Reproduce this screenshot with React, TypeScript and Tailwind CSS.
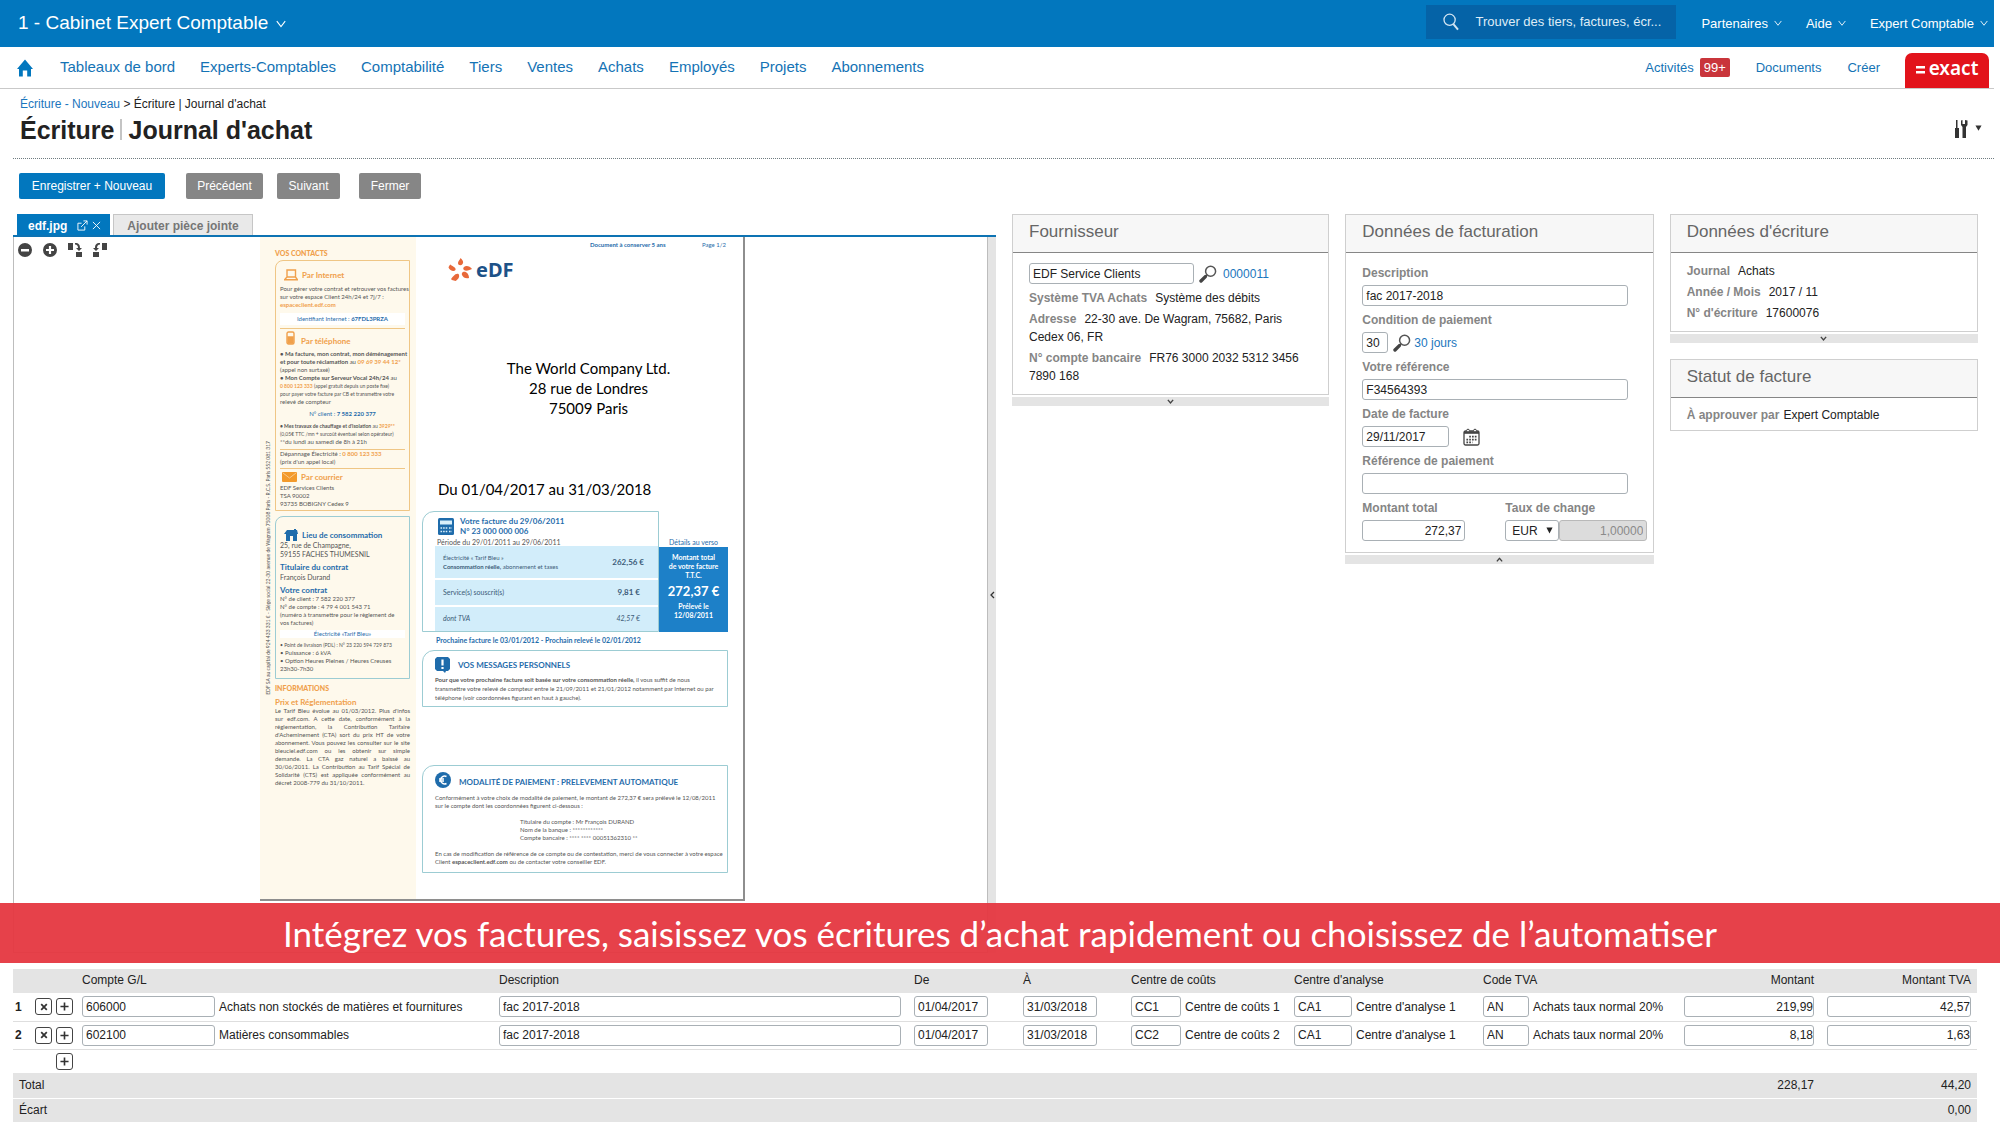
import type { ReactNode } from "react";

const field =
  "h-[21px] min-w-0 rounded-[3px] border border-[#a9b0b5] bg-white px-[3px] text-xs text-[#222] outline-none";

function Chevron({ className = "w-2" }: { className?: string }) {
  return (
    <svg viewBox="0 0 10 8" className={className} fill="none" stroke="currentColor" strokeWidth="1.1" aria-hidden="true">
      <path d="M0.8 1.2 5 6.6 9.2 1.2" />
    </svg>
  );
}

function Magnifier() {
  return (
    <svg viewBox="0 0 18 18" className="w-[18px]" fill="none" aria-hidden="true">
      <circle cx="11.6" cy="6.2" r="5" stroke="#555" strokeWidth="1.5" />
      <path d="M8 9.8 6.4 11.6" stroke="#555" strokeWidth="1.5" />
      <path d="M6.4 11.6 2 16" stroke="#444" strokeWidth="3.4" strokeLinecap="round" />
    </svg>
  );
}

function CalendarIcon() {
  return (
    <svg viewBox="0 0 17 18" className="w-[17px]" fill="none" stroke="#444" aria-hidden="true">
      <rect x="1" y="3" width="15" height="14" rx="1.5" strokeWidth="1.3" />
      <path d="M1 4.5h15" strokeWidth="2.6" />
      <circle cx="5" cy="2.6" r="1.4" fill="#fff" />
      <circle cx="12" cy="2.6" r="1.4" fill="#fff" />
      <path d="M6.2 8.6h8M3.4 11.6h10.8M3.4 14.4h6" strokeWidth="1.7" strokeDasharray="1.7 1.1" />
    </svg>
  );
}

function Card({ title, arrow, children }: { title: string; arrow?: "up" | "down"; children: ReactNode }) {
  return (
    <section className="mb-4">
      <div className="border border-[#cfcfcf] bg-white">
        <h2 className="h-[38px] border-b border-[#868686] bg-[#f7f7f7] px-4 text-[17px] leading-[34px] text-[#666]">{title}</h2>
        {children}
      </div>
      {arrow && (
        <button type="button" aria-label={`Basculer ${title}`} className="mt-0.5 flex h-[9px] w-full items-center justify-center bg-[#e4e4e4] text-[#444]">
          <svg viewBox="0 0 8 6" className={arrow === "up" ? "w-[7px] rotate-180" : "w-[7px]"} fill="none" stroke="currentColor" strokeWidth="1.6" aria-hidden="true">
            <path d="M1 1 4 4.4 7 1" />
          </svg>
        </button>
      )}
    </section>
  );
}

function Pair({ label, children }: { label: string; children: ReactNode }) {
  return (
    <p>
      <b className="mr-2 text-[#858585]">{label}</b>
      {children}
    </p>
  );
}

function Label({ id, children }: { id: string; children: ReactNode }) {
  return (
    <label htmlFor={id} className="block h-[26px] text-xs leading-7 font-bold text-[#858585]">
      {children}
    </label>
  );
}

function TopBar() {
  return (
    <header className="mr-1.5 flex h-[47px] items-center bg-[#0277be] pl-[18px] text-white">
      <button type="button" className="flex items-center gap-2 text-[19px]">
        1 - Cabinet Expert Comptable <Chevron className="w-2.5" />
      </button>
      <label className="mb-1 ml-auto flex h-[34px] w-[250px] items-center bg-[#0563a7] pl-[17px]">
        <svg viewBox="0 0 16 18" className="w-4" fill="none" stroke="#d5e6f3" strokeWidth="1.3" aria-hidden="true">
          <circle cx="6.6" cy="6.8" r="5.6" />
          <path d="m10.4 11.2 4.6 5.4" strokeWidth="2" />
        </svg>
        <input
          aria-label="Recherche"
          placeholder="Trouver des tiers, factures, écr..."
          className="ml-4 w-[196px] bg-transparent text-[13px] outline-none placeholder:text-[#dfecf6]"
        />
      </label>
      <div className="ml-[25px] flex items-center gap-6 pr-1.5 text-[13px]">
        {["Partenaires", "Aide", "Expert Comptable"].map((t) => (
          <button key={t} type="button" className="flex items-center gap-1.5">
            {t} <Chevron />
          </button>
        ))}
      </div>
    </header>
  );
}

function NavBar() {
  const items = ["Tableaux de bord", "Experts-Comptables", "Comptabilité", "Tiers", "Ventes", "Achats", "Employés", "Projets", "Abonnements"];
  return (
    <nav className="mr-1.5 flex h-[42px] items-center border-b border-[#c9c9c9] pl-4 text-[#1473b5]">
      <a href="#accueil" aria-label="Accueil" className="mr-[26px]">
        <svg viewBox="0 0 18 18" className="w-[18px]" fill="#0277be" aria-hidden="true">
          <path d="M9 0.5 17 10h-2v7.5h-3.8v-6H6.8v6H3V10H1z" />
        </svg>
      </a>
      <div className="flex gap-[25px] text-[15px]">
        {items.map((t) => (
          <a key={t} href="#menu">{t}</a>
        ))}
      </div>
      <div className="ml-auto flex h-full items-center text-[13px]">
        <a href="#activites">Activités</a>
        <span className="ml-1.5 flex h-[19px] w-[30px] items-center justify-center rounded-[2px] bg-[#c9353b] text-white">99+</span>
        <a href="#documents" className="ml-[26px]">Documents</a>
        <a href="#creer" className="ml-[26px]">Créer</a>
        <a href="#exact" className="mr-[5px] ml-[25px] flex h-[35px] w-[84px] items-center justify-center gap-1 self-end rounded-t-[7px] bg-[#e2131b] pb-1 font-['Noto_Sans',sans-serif] text-[19px] font-semibold text-white">
          <svg viewBox="0 0 9 8" className="mt-0.5 w-[9px]" fill="#fff" aria-hidden="true">
            <path d="M0 0h9v2.4H0zM0 5h9v2.4H0z" />
          </svg>
          exact
        </a>
      </div>
    </nav>
  );
}

function Tiny({ children, className = "" }: { children: ReactNode; className?: string }) {
  return <p className={`text-[6px] leading-[8px] whitespace-nowrap ${className}`}>{children}</p>;
}

function Dense({ children }: { children: ReactNode }) {
  return <p className="text-[5px] leading-[8px] whitespace-nowrap">{children}</p>;
}

function Heading({ children, className = "" }: { children: ReactNode; className?: string }) {
  return <p className={`text-[8px] leading-[10px] font-bold whitespace-nowrap ${className}`}>{children}</p>;
}

function CapsHeading({ children, className = "" }: { children: ReactNode; className?: string }) {
  return <p className={`text-[7px] leading-[10px] font-black whitespace-nowrap ${className}`}>{children}</p>;
}

const orange = "text-[#f0a04b]";
const blue = "text-[#1f6cab]";

function InvoiceSide() {
  return (
    <div className="flex w-[156px] shrink-0 bg-[#fef9ec] text-[#555]">
      <div className="flex w-[15px] shrink-0 items-center justify-center">
        <p className="rotate-180 text-[5px] leading-[6px] whitespace-nowrap [writing-mode:vertical-rl]">
          EDF SA au capital de 924 433 331 € - Siège social 22-30 avenue de Wagram 75008 Paris - R.C.S. Paris 552 081 317
        </p>
      </div>
      <div className="w-[135px]">
        <CapsHeading className={`pt-[11px] pb-0.5 ${orange}`}>VOS CONTACTS</CapsHeading>
        <div className="h-[251px] rounded-tl-lg border border-[#efc685] px-1">
          <div className="mt-2 flex h-3 items-center gap-1 pl-1">
            <svg viewBox="0 0 14 12" className="w-3.5" fill="none" stroke="#f0a04b" strokeWidth="1.4" aria-hidden="true">
              <path d="M3 1h8.5v7H3zM0.5 10.8h13L11.5 8H3z" />
            </svg>
            <Heading className={orange}>Par Internet</Heading>
          </div>
          <Tiny className="mt-1">Pour gérer votre contrat et retrouver vos factures</Tiny>
          <Tiny>sur votre espace Client 24h/24 et 7j/7 :</Tiny>
          <Tiny className={`font-bold ${orange}`}>espaceclient.edf.com</Tiny>
          <Tiny className={`mt-1 bg-white py-0.5 text-center ${blue}`}>Identifiant Internet : <b>67FDL3PRZA</b></Tiny>
          <div className="mt-[3px] flex h-[18px] items-center gap-1.5 border-t border-[#efc685] pl-1.5">
            <svg viewBox="0 0 9 14" className="w-[9px]" fill="none" stroke="#f0a04b" strokeWidth="1.4" aria-hidden="true">
              <rect x="1" y="1" width="7" height="12" rx="1.5" />
              <path d="M2 6h5v6H2z" fill="#f0a04b" />
            </svg>
            <Heading className={`pt-1.5 ${orange}`}>Par téléphone</Heading>
          </div>
          <Tiny className="mt-1 font-bold">• Ma facture, mon contrat, mon déménagement</Tiny>
          <Tiny><b>et pour toute réclamation</b> au <b className={orange}>09 69 39 44 12*</b></Tiny>
          <Tiny>(appel non surtaxé)</Tiny>
          <Tiny><b>• Mon Compte sur Serveur Vocal 24h/24</b> au</Tiny>
          <Dense><b className={orange}>0 800 123 333</b> (appel gratuit depuis un poste fixe)</Dense>
          <Dense>pour payer votre facture par CB et transmettre votre</Dense>
          <Tiny>relevé de compteur</Tiny>
          <Tiny className={`my-1 text-center ${blue}`}>N° client : <b>7 582 220 377</b></Tiny>
          <Dense><b>• Mes travaux de chauffage et d'isolation</b> au <b className={orange}>3929**</b></Dense>
          <Dense>(0,05€ TTC /mn + surcoût éventuel selon opérateur)</Dense>
          <Tiny className="mb-[3px]">**du lundi au samedi de 8h à 21h</Tiny>
          <Tiny className="border-t border-[#efc685]">Dépannage Électricité : <b className={orange}>0 800 123 333</b></Tiny>
          <Tiny>(prix d'un appel local)</Tiny>
          <div className="mt-0.5 flex h-4 items-center gap-1 border-t border-[#efc685] pl-0.5">
            <svg viewBox="0 0 15 10" className="w-[15px]" aria-hidden="true">
              <rect width="15" height="10" rx="1" fill="#f39a2b" />
              <path d="m1 1 6.5 5L14 1" fill="none" stroke="#f8c98c" />
            </svg>
            <Heading className={orange}>Par courrier</Heading>
          </div>
          <Tiny>EDF Services Clients</Tiny>
          <Tiny>TSA 90002</Tiny>
          <Tiny>93735 BOBIGNY Cedex 9</Tiny>
        </div>
        <div className="mt-[5px] h-[163px] rounded-tl-lg border border-[#9cccd3] px-1">
          <div className="mt-3 flex h-3 items-center gap-1 pl-1">
            <svg viewBox="0 0 14 12" className="w-3.5" fill="#1f6cab" aria-hidden="true">
              <path d="M0 5 3 1h10l1 4h-1v7H9V7H6v5H2V5zM10 0h2v2h-2z" />
            </svg>
            <Heading className={blue}>Lieu de consommation</Heading>
          </div>
          <p className="text-[7px] leading-[9px]">25, rue de Champagne,</p>
          <p className="text-[7px] leading-[9px]">59155 FACHES THUMESNIL</p>
          <Heading className={`mt-[3px] ${blue}`}>Titulaire du contrat</Heading>
          <p className="text-[7px] leading-[10px]">François Durand</p>
          <Heading className={`mt-[3px] ${blue}`}>Votre contrat</Heading>
          <Tiny>N° de client : 7 582 220 377</Tiny>
          <Tiny>N° de compte : 4 79 4 001 543 71</Tiny>
          <Tiny>(numéro à transmettre pour le règlement de</Tiny>
          <Tiny>vos factures)</Tiny>
          <Tiny className={`my-[3px] bg-white text-center ${blue}`}>Électricité «Tarif Bleu»</Tiny>
          <Dense>• Point de livraison (PDL) : N° 23 220 594 729 873</Dense>
          <Tiny>• Puissance : 6 kVA</Tiny>
          <Tiny>• Option Heures Pleines / Heures Creuses</Tiny>
          <Tiny>23h30-7h30</Tiny>
        </div>
        <CapsHeading className={`mt-1 ${orange}`}>INFORMATIONS</CapsHeading>
        <Heading className={`mt-1 ${orange}`}>Prix et Réglementation</Heading>
        <p className="text-justify text-[6px] leading-[8px]">
          Le Tarif Bleu évolue au 01/03/2012. Plus d'infos sur edf.com. A cette date, conformément à la réglementa&shy;tion, la Contribu&shy;tion
          Tarifaire d'Achemine&shy;ment (CTA) sort du prix HT de votre abonne&shy;ment. Vous pouvez les consulter sur le site bleuciel.edf.com ou
          les obtenir sur simple demande. La CTA gaz naturel a baissé au 30/06/2011. La Contribu&shy;tion au Tarif Spécial de Solidarité (CTS)
          est appliquée conformé&shy;ment au décret 2008-779 du 31/10/2011.
        </p>
      </div>
    </div>
  );
}

function InvoiceMain() {
  return (
    <div className="w-[315px] pl-1.5 text-[#555]">
      <div className={`flex pt-1 ${blue}`}>
        <Tiny className="ml-[168px] font-bold">Document à conserver 5 ans</Tiny>
        <Tiny className="ml-auto pr-[5px]">Page 1/2</Tiny>
      </div>
      <div className="mt-[9px] ml-[26px] flex h-6 items-center gap-1">
        <svg viewBox="0 0 24 24" className="w-6" fill="#e8693a" aria-hidden="true">
          <path d="M10 5c0-2 2-3 2.600-5 2 2 3.400 4 2 6-1.500 2-4.600 1.500-4.600-1z" />
          <path d="M16 9c2-2 6-1 8 2-2 1-6 2.500-8 1-1-1-1-2 0-3z" />
          <path d="M15 14c3-1 6 2 6 6-3 1-6-.5-7-3-.5-1.500 0-2.500 1-3z" />
          <path d="M10.500 16c1.500 2 .5 5-3 7-2-.5-4-1-4.500-2 2-2 4-6 7.500-5z" />
          <path d="M7.500 12C6 14 2 13 0.500 9.500 1 8 1.500 7 2.500 6.500 4 8.500 8.500 9 7.500 12z" />
        </svg>
        <span className="font-['Noto_Sans',sans-serif] text-xl leading-6 font-bold text-[#1d5288]">eDF</span>
      </div>
      <p className="mt-[76px] ml-6 text-center text-[15px] leading-5 text-black">
        The World Company Ltd.
        <br />
        28 rue de Londres
        <br />
        75009 Paris
      </p>
      <p className="mt-[61px] ml-4 text-[15px] leading-5 text-black">Du 01/04/2017 au 31/03/2018</p>
      <div className="mt-3 flex h-[121px] items-end">
        <div className="flex h-full w-[237px] flex-col rounded-tl-xl border border-[#9cccd3]">
          <div className="mt-1 flex h-5 items-center gap-1.5 pl-[15px]">
            <svg viewBox="0 0 16 17" className="w-4" aria-hidden="true">
              <rect width="16" height="17" rx="1.5" fill="#1f6cab" />
              <path d="M2 2.500h12v4H2z" fill="#d9effa" />
              <path d="M2.500 10h7M2.500 13.500h7M11 10h3M11 13.500h3" stroke="#d9effa" strokeWidth="1.600" strokeDasharray="1.600 1" />
            </svg>
            <div className={blue}>
              <Heading>Votre facture du 29/06/2011</Heading>
              <Heading>N° 23 000 000 006</Heading>
            </div>
          </div>
          <p className="mt-0.5 pl-3.5 text-[7px] leading-[8px]">Période du 29/01/2011 au 29/06/2011</p>
          <div className="ml-3 flex flex-1 flex-col gap-0.5 text-[6px] leading-[9px] text-[#3b5b78]">
            <div className="flex flex-[4] items-center justify-between bg-[#d2edfa] pr-3.5 pl-2">
              <span>
                Électricité « Tarif Bleu »<br />
                <b>Consommation réelle,</b> abonnement et taxes
              </span>
              <b className="text-[8px]">262,56 €</b>
            </div>
            <div className="flex flex-[3] items-center justify-between bg-[#d2edfa] pr-[18px] pl-2 text-[7px]">
              Service(s) souscrit(s) <b className="text-[8px]">9,81 €</b>
            </div>
            <div className="flex flex-[3] items-center justify-between bg-[#d2edfa] pr-[18px] pl-2 text-[7px]">
              <i>dont TVA</i> <i>42,57 €</i>
            </div>
          </div>
        </div>
        <div className="w-[69px] text-center">
          <p className={`text-[7px] leading-[10px] ${blue}`}>Détails au verso</p>
          <div className="flex h-[85px] flex-col items-center bg-[#1d80c8] pt-1.5 text-[7px] leading-[9px] font-bold text-white">
            <p>
              Montant total
              <br />
              de votre facture
              <br />
              T.T.C.
            </p>
            <p className="my-1 text-[13px] leading-[14px]">272,37 €</p>
            <p>
              Prélevé le
              <br />
              12/08/2011
            </p>
          </div>
        </div>
      </div>
      <p className={`mt-1 ml-3.5 text-[7px] leading-[9px] font-bold whitespace-nowrap ${blue}`}>
        Prochaine facture le 03/01/2012 - Prochain relevé le 02/01/2012
      </p>
      <div className="mt-[5px] h-[57px] w-[306px] rounded-tl-xl border border-[#9cccd3] px-3 pt-1.5 text-[6px] leading-[9px] whitespace-nowrap">
        <div className="flex h-4 items-center gap-2">
          <svg viewBox="0 0 15 16" className="w-[15px]" aria-hidden="true">
            <path d="M2 0h11l2 2v10l-2 2h-2l-1 2-2-2H2l-2-2V2z" fill="#1f6cab" />
            <path d="M7.500 2.500v6M7.500 10v2" stroke="#fff" strokeWidth="2.200" />
          </svg>
          <p className={`text-[8px] font-bold ${blue}`}>VOS MESSAGES PERSONNELS</p>
        </div>
        <p className="mt-0.5">
          <b>Pour que votre prochaine facture soit basée sur votre consommation réelle,</b> il vous suffit de nous
          <br />
          transmettre votre relevé de compteur entre le 21/09/2011 et 21/01/2012 notamment par Internet ou par
          <br />
          téléphone (voir coordonnées figurant en haut à gauche).
        </p>
      </div>
      <div className="mt-[58px] h-[108px] w-[306px] rounded-tl-xl border border-[#9cccd3] px-3 pt-1.5 text-[6px] leading-[8px] whitespace-nowrap">
        <div className="flex h-4 items-center gap-2">
          <svg viewBox="0 0 16 16" className="w-4" aria-hidden="true">
            <circle cx="8" cy="8" r="8" fill="#1f6cab" />
            <path d="M11.500 4.500A4 4 0 1 0 11.500 11.500M4 7h5M4 9h5" fill="none" stroke="#fff" strokeWidth="1.500" />
          </svg>
          <p className={`pt-1 text-[8px] font-bold ${blue}`}>MODALITÉ DE PAIEMENT : PRELEVEMENT AUTOMATIQUE</p>
        </div>
        <p className="mt-1.5">
          Conformément à votre choix de modalité de paiement, le montant de 272,37 € sera prélevé le 12/08/2011
          <br />
          sur le compte dont les coordonnées figurent ci-dessous :
        </p>
        <p className="mt-2 pl-[85px]">
          Titulaire du compte : Mr François DURAND
          <br />
          Nom de la banque : ************
          <br />
          Compte bancaire : **** **** 00051362310 **
        </p>
        <p className="mt-2">
          En cas de modification de référence de ce compte ou de contestation, merci de vous connecter à votre espace
          <br />
          Client <b>espaceclient.edf.com</b> ou de contacter votre conseiller EDF.
        </p>
      </div>
    </div>
  );
}

function Viewer() {
  return (
    <div>
      <div className="flex h-[21px] gap-[3px] pl-1 text-xs font-bold">
        <div className="flex w-[93px] items-center bg-[#0277be] pt-0.5 pl-[11px] text-white">
          <button type="button">edf.jpg</button>
          <button type="button" aria-label="Ouvrir" className="ml-2.5">
            <svg viewBox="0 0 12 12" className="w-[11px]" fill="none" stroke="#fff" aria-hidden="true">
              <path d="M5 3.500H1v7.500h7.500V7M4.500 7.500 11 1M7 1h4v4" />
            </svg>
          </button>
          <button type="button" aria-label="Fermer l'onglet" className="ml-1">
            <svg viewBox="0 0 10 10" className="w-[9px]" fill="none" stroke="#fff" aria-hidden="true">
              <path d="m1 1 8 8M9 1 1 9" />
            </svg>
          </button>
        </div>
        <button type="button" className="w-[140px] border border-b-0 border-[#c6c6c6] bg-[#e9e9e9] pt-0.5 text-[#767676]">Ajouter pièce jointe</button>
      </div>
      <div className="flex border-t-2 border-[#0d73b3]">
        <div className="flex h-[716px] flex-1 items-start border border-t-0 border-[#bdbdbd] bg-white">
          <div className="flex w-[246px] gap-[9px] pt-[5px] pl-[3px] text-[#444]">
            {[
              ["Réduire", <path key="a" d="M8 1a7 7 0 1 0 0 14A7 7 0 0 0 8 1ZM4 7h8v2.400H4z" />],
              ["Agrandir", <path key="b" d="M8 1a7 7 0 1 0 0 14A7 7 0 0 0 8 1ZM4 6.900h2.900V4h2.200v2.900H12v2.200H9.100V12H6.900V9.100H4z" />],
              ["Rotation à droite", <path key="c" d="M1 1h5v7H1zM9 10h6v5H9zM8 1c4 0 5 2 5 5h2l-3 3-3-3h2c0-2-1-3.500-3-3.500z" />],
              ["Rotation à gauche", <path key="d" d="M15 1h-5v7h5zM7 10H1v5h6zM8 1C4 1 3 3 3 6H1l3 3 3-3H5c0-2 1-3.500 3-3.500z" />],
            ].map(([name, shape]) => (
              <button key={name as string} type="button" aria-label={name as string}>
                <svg viewBox="0 0 16 16" className="w-4" fill="currentColor" fillRule="evenodd" aria-hidden="true">
                  {shape}
                </svg>
              </button>
            ))}
          </div>
          <div className="flex h-[664px] w-[485px] shrink-0 overflow-hidden border-r-2 border-b-2 border-[#8e8e8e] bg-white font-[Lato,sans-serif]">
            <InvoiceSide />
            <InvoiceMain />
          </div>
        </div>
        <button type="button" aria-label="Replier le volet" className="flex w-[8px] items-center justify-center bg-[#e4e4e4] text-[#333]">
          <svg viewBox="0 0 5 8" className="w-[5px]" fill="none" stroke="currentColor" strokeWidth="1.300" aria-hidden="true">
            <path d="M4 1 1 4l3 3" />
          </svg>
        </button>
      </div>
    </div>
  );
}

function SupplierCard() {
  return (
    <Card title="Fournisseur" arrow="down">
      <div className="px-4 pt-2.5 pb-[9px] text-xs leading-[18px] text-[#222]">
        <div className="flex items-center">
          <input aria-label="Fournisseur" defaultValue="EDF Service Clients" className={`${field} w-[165px]`} />
          <button type="button" aria-label="Chercher un fournisseur" className="ml-[5px]">
            <Magnifier />
          </button>
          <a href="#0000011" className="ml-1.5 text-[#1b76bd]">0000011</a>
        </div>
        <div className="mt-[5px] space-y-[3px]">
          <Pair label="Système TVA Achats">Système des débits</Pair>
          <Pair label="Adresse">22-30 ave. De Wagram, 75682, Paris Cedex 06, FR</Pair>
          <Pair label="N° compte bancaire">FR76 3000 2032 5312 3456 7890 168</Pair>
        </div>
      </div>
    </Card>
  );
}

function BillingCard() {
  return (
    <Card title="Données de facturation" arrow="up">
      <div className="px-4 pt-1.5 pb-[11px]">
        <Label id="desc">Description</Label>
        <input id="desc" defaultValue="fac 2017-2018" className={`${field} block w-[266px]`} />
        <Label id="cond">Condition de paiement</Label>
        <div className="flex items-center">
          <input id="cond" defaultValue="30" className={`${field} w-[26px]`} />
          <button type="button" aria-label="Chercher une condition" className="ml-[5px]">
            <Magnifier />
          </button>
          <a href="#30-jours" className="ml-[3px] text-xs text-[#1b76bd]">30 jours</a>
        </div>
        <Label id="ref">Votre référence</Label>
        <input id="ref" defaultValue="F34564393" className={`${field} block w-[266px]`} />
        <Label id="date">Date de facture</Label>
        <div className="flex items-center">
          <input id="date" defaultValue="29/11/2017" className={`${field} w-[87px]`} />
          <button type="button" aria-label="Calendrier" className="ml-3.5">
            <CalendarIcon />
          </button>
        </div>
        <Label id="refp">Référence de paiement</Label>
        <input id="refp" className={`${field} block w-[266px]`} />
        <div className="flex gap-10">
          <div>
            <Label id="total">Montant total</Label>
            <input id="total" defaultValue="272,37" className={`${field} block w-[103px] text-right`} />
          </div>
          <div className="-mr-3">
            <Label id="taux">Taux de change</Label>
            <div className="flex">
              <div className="relative">
                <select aria-label="Devise" className={`${field} block w-[54px] appearance-none pl-1.5`}>
                  <option>EUR</option>
                </select>
                <svg viewBox="0 0 8 8" className="pointer-events-none absolute top-[7px] right-[6px] w-[7px]" fill="#222" aria-hidden="true">
                  <path d="M0.500 0.500h7L4 7.500z" />
                </svg>
              </div>
              <input id="taux" disabled defaultValue="1,00000" className="h-[21px] w-[88px] rounded-[3px] border border-[#b9b9b9] bg-[#dcdcdc] px-[3px] text-right text-xs text-[#8a8a8a]" />
            </div>
          </div>
        </div>
      </div>
    </Card>
  );
}

const rows = [
  ["1", "606000", "Achats non stockés de matières et fournitures", "CC1", "Centre de coûts 1", "219,99", "42,57"],
  ["2", "602100", "Matières consommables", "CC2", "Centre de coûts 2", "8,18", "1,63"],
];

function SquareButton({ kind }: { kind: "plus" | "cross" }) {
  return (
    <button type="button" aria-label={kind === "plus" ? "Ajouter une ligne" : "Supprimer la ligne"} className="flex size-[17px] items-center justify-center rounded-[3px] border border-[#444]">
      <svg viewBox="0 0 10 10" className={kind === "plus" ? "w-[9px]" : "w-2"} stroke="#333" fill="none" strokeWidth={kind === "plus" ? 1.8 : 2.2} aria-hidden="true">
        <path d={kind === "plus" ? "M5 0.500v9M0.500 5h9" : "m1.500 1.500 7 7M8.500 1.500l-7 7"} />
      </svg>
    </button>
  );
}

function Lines() {
  const heads = ["Compte G/L", "Description", "De", "À", "Centre de coûts", "Centre d'analyse", "Code TVA"];
  return (
    <table className="w-full table-fixed border-collapse text-left text-xs text-[#222]">
      <colgroup>
        <col className="w-[69px]" />
        <col className="w-[417px]" />
        <col />
        <col className="w-[109px]" />
        <col className="w-[108px]" />
        <col className="w-[163px]" />
        <col className="w-[189px]" />
        <col className="w-[201px]" />
        <col className="w-[143px]" />
        <col className="w-[150px]" />
      </colgroup>
      <thead>
        <tr className="h-6 bg-[#e4e4e4]">
          <td />
          {heads.map((h) => (
            <th key={h} className="pb-0.5 font-normal">{h}</th>
          ))}
          <th className="pr-[13px] pb-0.5 text-right font-normal">Montant</th>
          <th className="pr-1.5 pb-0.5 text-right font-normal">Montant TVA</th>
        </tr>
      </thead>
      <tbody>
        {rows.map(([n, code, name, cc, ccName, amount, vat]) => (
          <tr key={n} className="h-[28px] border-b border-[#dedede]">
            <th>
              <div className="flex items-center gap-1 pl-0.5">
                <span className="w-4">{n}</span>
                <SquareButton kind="cross" />
                <SquareButton kind="plus" />
              </div>
            </th>
            <td>
              <div className="flex items-center gap-1">
                <input aria-label={`Compte G/L ${n}`} defaultValue={code} className={`${field} w-[133px]`} />
                {name}
              </div>
            </td>
            <td className="pr-[13px]">
              <input aria-label={`Description ${n}`} defaultValue="fac 2017-2018" className={`${field} block w-full`} />
            </td>
            <td>
              <input aria-label={`De ${n}`} defaultValue="01/04/2017" className={`${field} block w-[74px]`} />
            </td>
            <td>
              <input aria-label={`À ${n}`} defaultValue="31/03/2018" className={`${field} block w-[74px]`} />
            </td>
            <td>
              <div className="flex items-center gap-1 whitespace-nowrap">
                <input aria-label={`Centre de coûts ${n}`} defaultValue={cc} className={`${field} w-[50px]`} />
                {ccName}
              </div>
            </td>
            <td>
              <div className="flex items-center gap-1 whitespace-nowrap">
                <input aria-label={`Centre d'analyse ${n}`} defaultValue="CA1" className={`${field} w-[58px]`} />
                Centre d'analyse 1
              </div>
            </td>
            <td>
              <div className="flex items-center gap-1 whitespace-nowrap">
                <input aria-label={`Code TVA ${n}`} defaultValue="AN" className={`${field} w-[46px]`} />
                Achats taux normal 20%
              </div>
            </td>
            <td className="pr-[13px]">
              <input aria-label={`Montant ${n}`} defaultValue={amount} className={`${field} block w-full pr-0 text-right`} />
            </td>
            <td className="pr-1.5">
              <input aria-label={`Montant TVA ${n}`} defaultValue={vat} className={`${field} block w-full pr-0 text-right`} />
            </td>
          </tr>
        ))}
        <tr className="h-6">
          <td className="pl-[43px]">
            <SquareButton kind="plus" />
          </td>
          <td colSpan={9} />
        </tr>
      </tbody>
      <tfoot>
        <tr className="h-[25px] border-b border-white bg-[#e4e4e4]">
          <th className="pl-1.5 font-normal">Total</th>
          <td colSpan={7} />
          <td className="pr-[13px] text-right">228,17</td>
          <td className="pr-1.5 text-right">44,20</td>
        </tr>
        <tr className="h-6 bg-[#e4e4e4]">
          <th className="pl-1.5 font-normal">Écart</th>
          <td colSpan={8} />
          <td className="pr-1.5 text-right">0,00</td>
        </tr>
      </tfoot>
    </table>
  );
}

export default function App() {
  const action = "h-[26px] rounded-[2px] bg-[#868686] text-white";
  return (
    <div className="bg-white pb-0.5 font-['Liberation_Sans',Arial,sans-serif] text-[#222]">
      <TopBar />
      <NavBar />
      <div className="mr-1.5 ml-[13px] flex h-[70px] items-center border-b border-dotted border-[#6f7c80] pr-3 pl-[7px]">
        <div className="-mt-1">
          <p className="text-xs leading-4">
            <a href="#ecriture" className="text-[#1b76bd]">Écriture - Nouveau</a> &gt; Écriture | Journal d'achat
          </p>
          <h1 className="flex items-center text-[25px] leading-9 font-bold">
            Écriture <span className="mx-1.5 h-[21px] w-0.5 bg-[#c4c4c4]" /> Journal d'achat
          </h1>
        </div>
        <button type="button" aria-label="Outils" className="mt-2.5 ml-auto flex items-center gap-[7px]">
          <svg viewBox="0 0 14 18" className="w-3.5" fill="#333" aria-hidden="true">
            <path d="M2 0h1.500v8H5v10H1V8h1zM7 0.500 8.500 0v4h2.500V0l2.500.5V5l-1.500 2v11H8.500V7L7 5z" />
          </svg>
          <svg viewBox="0 0 8 7" className="w-[7px]" fill="#333" aria-hidden="true">
            <path d="M0.500 0.500h7L4 6.500z" />
          </svg>
        </button>
      </div>
      <div className="flex pt-3.5 pb-[15px] pl-[19px] text-xs">
        <button type="button" className="h-[26px] w-[146px] rounded-[2px] bg-[#0277be] text-white">Enregistrer + Nouveau</button>
        <button type="button" className={`${action} ml-[21px] w-[77px]`}>Précédent</button>
        <button type="button" className={`${action} ml-3.5 w-[63px]`}>Suivant</button>
        <button type="button" className={`${action} ml-[19px] w-[62px]`}>Fermer</button>
      </div>
      <main className="grid grid-cols-[982fr_317fr_308fr_308fr] gap-x-4 pr-[22px] pl-[13px]">
        <Viewer />
        <SupplierCard />
        <BillingCard />
        <div>
          <Card title="Données d'écriture" arrow="down">
            <div className="px-4 pt-2 pb-[7px] text-xs leading-[21px]">
              <Pair label="Journal">Achats</Pair>
              <Pair label="Année / Mois">2017 / 11</Pair>
              <Pair label="N° d'écriture">17600076</Pair>
            </div>
          </Card>
          <Card title="Statut de facture">
            <p className="px-4 pt-[7px] pb-1 text-xs leading-[21px]">
              <b className="mr-1 text-[#858585]">À approuver par</b>
              Expert Comptable
            </p>
          </Card>
        </div>
      </main>
      <div className="relative z-10 -mt-[50px] flex h-[60px] items-center justify-center bg-[#e53740]/95 font-[Lato,sans-serif] text-[35px] whitespace-nowrap text-white">
        Intégrez vos factures, saisissez vos écritures d’achat rapidement ou choisissez de l’automatiser
      </div>
      <div className="pt-1.5 pr-[23px] pl-[13px]">
        <Lines />
      </div>
    </div>
  );
}
